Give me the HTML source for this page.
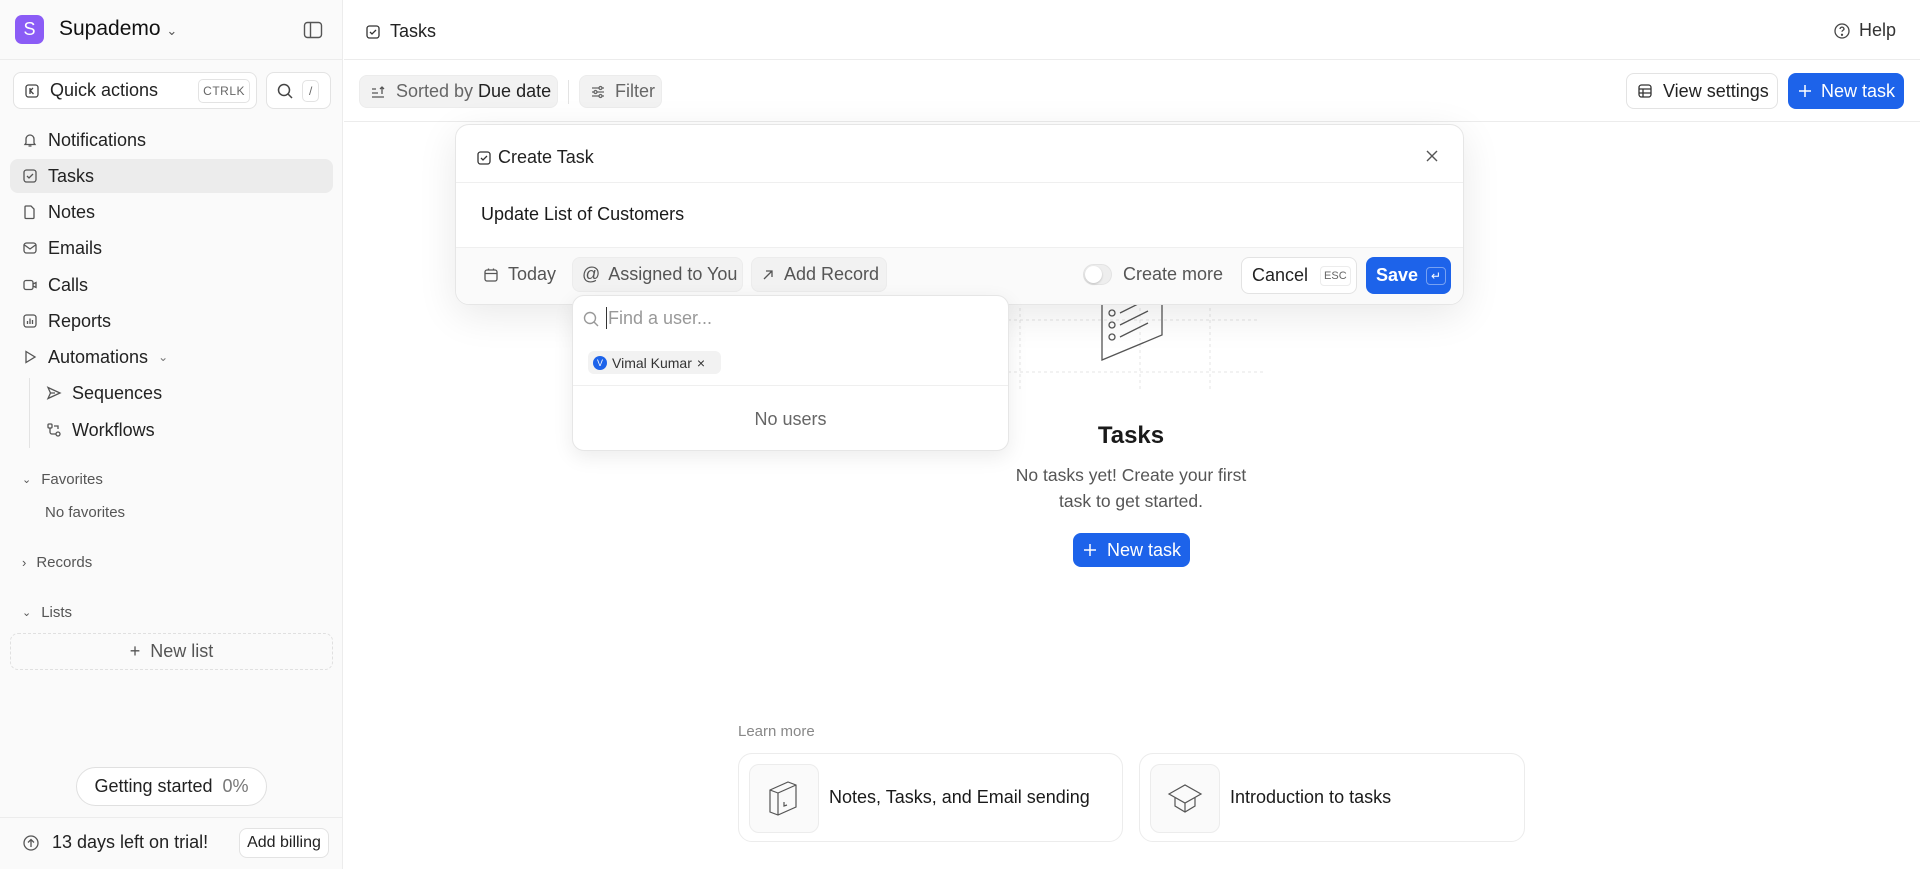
<!DOCTYPE html>
<html><head><meta charset="utf-8"><style>
*{box-sizing:border-box;margin:0;padding:0}
body{width:1920px;height:869px;overflow:hidden;font-family:"Liberation Sans",sans-serif;color:#1f2328;background:#fff;position:relative}
.abs{position:absolute}
svg{display:block}
.sb{left:0;top:0;width:343px;height:869px;background:#fafafa;border-right:1px solid #ececec}
.item{position:absolute;left:22px;font-size:18px;color:#222;display:flex;align-items:center;gap:10px;height:34px}
.sec{position:absolute;left:22px;font-size:15px;color:#555;display:flex;align-items:center;gap:10px}
.btn{position:absolute;border:1px solid #e3e3e3;border-radius:8px;background:#fff;display:flex;align-items:center;font-size:18px}
.blue{background:#1d63ea;color:#fff;border:none}
.grey{background:#f2f2f2;border:1px solid #ececec}
</style></head><body>
<div class="abs sb">
  <div class="abs" style="left:15px;top:15px;width:29px;height:29px;border-radius:7px;background:#8b5cf6;color:#fff;font-size:18px;display:flex;align-items:center;justify-content:center">S</div>
  <div class="abs" style="left:59px;top:17px;font-size:21px;color:#111">Supademo <span style="font-size:13px;color:#555">&#8964;</span></div>
  <svg class="abs" style="left:303px;top:20px" width="20" height="20" viewBox="0 0 20 20" fill="none" stroke="#555" stroke-width="1.4"><rect x="1.5" y="2.5" width="17" height="15" rx="3"/><line x1="7.5" y1="2.5" x2="7.5" y2="17.5"/></svg>
  <div class="abs" style="left:0;top:59px;width:343px;border-top:1px solid #ececec"></div>
  <div class="btn" style="left:13px;top:72px;width:244px;height:37px;padding-left:10px;gap:10px;font-size:18px;color:#222">
    <svg width="16" height="16" viewBox="0 0 16 16" fill="none" stroke="#444" stroke-width="1.3"><rect x="2" y="2" width="12" height="12" rx="2.5"/><path d="M6 5v6M6 8l3-3M6.5 8l3 3"/></svg>Quick actions
    <span style="position:absolute;right:6px;top:6px;border:1px solid #e3e3e3;border-radius:5px;font-size:12px;color:#666;padding:4px 4px;letter-spacing:.5px">CTRLK</span></div>
  <div class="btn" style="left:266px;top:72px;width:65px;height:37px;padding-left:9px;gap:8px">
    <svg width="18" height="18" viewBox="0 0 18 18" fill="none" stroke="#444" stroke-width="1.5"><circle cx="8" cy="8" r="5.5"/><path d="M12 12l4 4"/></svg>
    <span style="border:1px solid #e3e3e3;border-radius:5px;font-size:12px;color:#666;padding:3px 6px">/</span></div>
  <div class="abs" style="left:10px;top:159px;width:323px;height:34px;background:#ececec;border-radius:8px"></div>
  <div class="item" style="top:123px"><svg width="16" height="16" viewBox="0 0 16 16" fill="none" stroke="#555" stroke-width="1.3"><path d="M4 11V7a4 4 0 018 0v4l1 1.5H3z M6.5 14h3"/></svg>Notifications</div>
  <div class="item" style="top:159px"><svg width="16" height="16" viewBox="0 0 16 16" fill="none" stroke="#555" stroke-width="1.3"><rect x="2" y="2" width="12" height="12" rx="2.5"/><path d="M5 8l2 2 4-4"/></svg>Tasks</div>
  <div class="item" style="top:195px"><svg width="16" height="16" viewBox="0 0 16 16" fill="none" stroke="#555" stroke-width="1.3"><path d="M4 2h5l3 3v8.5a1 1 0 01-1 1H4a1 1 0 01-1-1V3a1 1 0 011-1z"/></svg>Notes</div>
  <div class="item" style="top:231px"><svg width="16" height="16" viewBox="0 0 16 16" fill="none" stroke="#555" stroke-width="1.3"><rect x="2" y="3" width="12" height="10" rx="2.5"/><path d="M2.5 5l5.5 4 5.5-4"/></svg>Emails</div>
  <div class="item" style="top:268px"><svg width="16" height="16" viewBox="0 0 16 16" fill="none" stroke="#555" stroke-width="1.3"><rect x="2" y="3.5" width="9" height="9" rx="2"/><path d="M11 7l3-1.5v5L11 9"/></svg>Calls</div>
  <div class="item" style="top:304px"><svg width="16" height="16" viewBox="0 0 16 16" fill="none" stroke="#555" stroke-width="1.3"><rect x="2" y="2" width="12" height="12" rx="2.5"/><path d="M5.5 11V8M8 11V5.5M10.5 11V7"/></svg>Reports</div>
  <div class="item" style="top:340px"><svg width="16" height="16" viewBox="0 0 16 16" fill="none" stroke="#555" stroke-width="1.3"><path d="M4 2.5l9 5.5-9 5.5z"/></svg>Automations <span style="font-size:12px;color:#777">&#8964;</span></div>
  <div class="abs" style="left:29px;top:378px;height:70px;border-left:1px solid #e3e3e3"></div>
  <div class="item" style="top:376px;left:46px"><svg width="16" height="16" viewBox="0 0 16 16" fill="none" stroke="#555" stroke-width="1.3"><path d="M2 2.5l12 5.5-12 5.5 2.5-5.5z M4.5 8H9"/></svg>Sequences</div>
  <div class="item" style="top:413px;left:46px"><svg width="16" height="16" viewBox="0 0 16 16" fill="none" stroke="#555" stroke-width="1.3"><rect x="2" y="2" width="4" height="4" rx="1"/><circle cx="12" cy="12" r="2"/><path d="M4 6v4a2 2 0 002 2h4M8 4h4v3"/></svg>Workflows</div>
  <div class="sec" style="top:471px"><span style="font-size:11px">&#8964;</span>Favorites</div>
  <div class="sec" style="top:504px;left:45px">No favorites</div>
  <div class="sec" style="top:554px"><span style="font-size:13px">&#8250;</span>Records</div>
  <div class="sec" style="top:604px"><span style="font-size:11px">&#8964;</span>Lists</div>
  <div class="abs" style="left:10px;top:633px;width:323px;height:37px;border:1px dashed #e0e0e0;border-radius:8px;display:flex;align-items:center;justify-content:center;font-size:18px;color:#555">+&nbsp; New list</div>
  <div class="abs" style="left:76px;top:767px;width:191px;height:39px;border:1px solid #e0e0e0;border-radius:20px;background:#fff;display:flex;align-items:center;justify-content:center;font-size:18px;color:#222">Getting started&nbsp;&nbsp;<span style="color:#777">0%</span></div>
  <div class="abs" style="left:0;top:817px;width:343px;border-top:1px solid #ececec"></div>
  <div class="abs" style="left:22px;top:832px;display:flex;align-items:center;gap:12px;font-size:18px;color:#222"><svg width="18" height="18" viewBox="0 0 18 18" fill="none" stroke="#555" stroke-width="1.3"><circle cx="9" cy="9" r="7"/><path d="M9 13V6M6 8.5l3-3 3 3"/></svg>13 days left on trial!</div>
  <div class="btn" style="left:239px;top:828px;width:90px;height:30px;justify-content:center;font-size:16px;color:#222">Add billing</div>
</div>

<!-- main header -->
<div class="abs" style="left:365px;top:21px;display:flex;align-items:center;gap:9px;font-size:18px;color:#222"><svg width="16" height="16" viewBox="0 0 16 16" fill="none" stroke="#333" stroke-width="1.3"><rect x="2" y="2" width="12" height="12" rx="2.5"/><path d="M5 8l2 2 4-4"/></svg>Tasks</div>
<div class="abs" style="left:1833px;top:20px;display:flex;align-items:center;gap:8px;font-size:18px;color:#333"><svg width="18" height="18" viewBox="0 0 18 18" fill="none" stroke="#444" stroke-width="1.3"><circle cx="9" cy="9" r="7"/><path d="M7 7a2 2 0 114 .3c-.5 1-2 1.2-2 2.4"/><circle cx="9" cy="12.8" r=".5" fill="#444"/></svg>Help</div>
<div class="abs" style="left:344px;top:59px;width:1576px;border-top:1px solid #ececec"></div>
<div class="btn grey" style="left:359px;top:75px;width:199px;height:33px;padding-left:10px;gap:10px;color:#666"><svg width="16" height="16" viewBox="0 0 16 16" fill="none" stroke="#555" stroke-width="1.3"><path d="M2 13h12M2 9h6M2 5h4M12 10V3M10 5l2-2 2 2"/></svg><span>Sorted by <span style="color:#222">Due date</span></span></div>
<div class="abs" style="left:568px;top:80px;height:24px;border-left:1px solid #e3e3e3"></div>
<div class="btn grey" style="left:579px;top:75px;width:83px;height:33px;padding-left:10px;gap:9px;color:#666"><svg width="16" height="16" viewBox="0 0 16 16" fill="none" stroke="#666" stroke-width="1.3"><path d="M2 4h7M12 4h2M2 8h2M7 8h7M2 12h7M12 12h2"/><circle cx="10.5" cy="4" r="1.5"/><circle cx="5.5" cy="8" r="1.5"/><circle cx="10.5" cy="12" r="1.5"/></svg>Filter</div>
<div class="btn" style="left:1626px;top:73px;width:152px;height:36px;padding-left:10px;gap:10px;color:#222"><svg width="16" height="16" viewBox="0 0 16 16" fill="none" stroke="#333" stroke-width="1.3"><rect x="2" y="2" width="12" height="12" rx="2.5"/><path d="M2 6h12M2 10h12M6 6v8"/></svg>View settings</div>
<div class="btn blue" style="left:1788px;top:73px;width:116px;height:36px;padding-left:10px;gap:9px"><svg width="14" height="14" viewBox="0 0 14 14" stroke="#fff" stroke-width="1.5"><path d="M7 1v12M1 7h12"/></svg>New task</div>
<div class="abs" style="left:344px;top:121px;width:1576px;border-top:1px solid #ececec"></div>

<!-- illustration -->
<svg class="abs" style="left:960px;top:290px" width="320" height="110" viewBox="0 0 320 110" fill="none" stroke="#e4e4e4" stroke-dasharray="3 3"><path d="M0 82H305M60 0V100M180 0V100M250 0V100M0 30H300"/></svg>
<svg class="abs" style="left:1100px;top:305px" width="66" height="60" viewBox="0 0 66 60" fill="none" stroke="#555" stroke-width="1.3"><path d="M2 0V55l60-25V0"/><circle cx="12" cy="8" r="3"/><circle cx="12" cy="20" r="3"/><circle cx="12" cy="32" r="3"/><path d="M20 8l28-14M20 20l28-14M20 32l28-14"/></svg>

<div class="abs" style="left:1000px;top:422px;width:262px;text-align:center;font-size:24px;font-weight:bold;color:#1a1a1a">Tasks</div>
<div class="abs" style="left:980px;top:462px;width:302px;text-align:center;font-size:17.5px;color:#555;line-height:26px">No tasks yet! Create your first<br>task to get started.</div>
<div class="btn blue" style="left:1073px;top:533px;width:117px;height:34px;padding-left:10px;gap:10px"><svg width="14" height="14" viewBox="0 0 14 14" stroke="#fff" stroke-width="1.5"><path d="M7 1v12M1 7h12"/></svg>New task</div>

<div class="abs" style="left:738px;top:723px;font-size:15px;color:#888">Learn more</div>
<div class="abs" style="left:738px;top:753px;width:385px;height:89px;border:1px solid #ececec;border-radius:14px"></div>
<div class="abs" style="left:749px;top:764px;width:70px;height:69px;border:1px solid #ececec;border-radius:10px;background:#fafafa"></div>
<svg class="abs" style="left:766px;top:780px" width="36" height="38" viewBox="0 0 36 38" fill="none" stroke="#555" stroke-width="1.2"><path d="M4 10l18-8 8 3v22l-18 8-8-3z M12 13l18-8M12 13v22M4 10l8 3"/><path d="M18 22v4l3-1"/></svg>
<div class="abs" style="left:829px;top:787px;font-size:18px;color:#1a1a1a">Notes, Tasks, and Email sending</div>
<div class="abs" style="left:1139px;top:753px;width:386px;height:89px;border:1px solid #ececec;border-radius:14px"></div>
<div class="abs" style="left:1150px;top:764px;width:70px;height:69px;border:1px solid #ececec;border-radius:10px;background:#fafafa"></div>
<svg class="abs" style="left:1167px;top:782px" width="36" height="34" viewBox="0 0 36 34" fill="none" stroke="#555" stroke-width="1.2"><path d="M2 12L18 3l16 9-16 9z M8 15v9l10 6 10-6v-9 M18 21v9"/></svg>
<div class="abs" style="left:1230px;top:787px;font-size:18px;color:#1a1a1a">Introduction to tasks</div>

<!-- modal -->
<div class="abs" style="left:455px;top:124px;width:1009px;height:181px;background:#fff;border:1px solid #e6e6e6;border-radius:14px;box-shadow:0 10px 40px rgba(0,0,0,.09)">
  <div class="abs" style="left:20px;top:22px;display:flex;align-items:center;gap:6px;font-size:18px;color:#222"><svg width="16" height="16" viewBox="0 0 16 16" fill="none" stroke="#333" stroke-width="1.3"><rect x="2" y="2" width="12" height="12" rx="2.5"/><path d="M5 8l2 2 4-4"/></svg>Create Task</div>
  <svg class="abs" style="left:969px;top:24px" width="14" height="14" viewBox="0 0 14 14" stroke="#555" stroke-width="1.4"><path d="M2 2l10 10M12 2L2 12"/></svg>
  <div class="abs" style="left:0;top:57px;width:1007px;border-top:1px solid #efefef"></div>
  <div class="abs" style="left:25px;top:79px;font-size:18px;color:#1a1a1a">Update List of Customers</div>
  <div class="abs" style="left:0;top:122px;width:1007px;height:57px;border-top:1px solid #efefef;background:#fafafa;border-radius:0 0 14px 14px"></div>
  <div class="abs" style="left:27px;top:139px;display:flex;align-items:center;gap:9px;font-size:18px;color:#555"><svg width="16" height="16" viewBox="0 0 16 16" fill="none" stroke="#555" stroke-width="1.3"><rect x="2" y="3" width="12" height="11" rx="2"/><path d="M2 6.5h12M5.5 1.5v2M10.5 1.5v2"/></svg>Today</div>
  <div class="btn grey" style="left:116px;top:132px;width:171px;height:35px;padding-left:9px;gap:8px;color:#555"><span style="font-size:18px">@</span>Assigned to You</div>
  <div class="btn grey" style="left:295px;top:132px;width:136px;height:35px;padding-left:10px;gap:10px;color:#555"><svg width="12" height="12" viewBox="0 0 12 12" stroke="#555" stroke-width="1.3" fill="none"><path d="M2 10L10 2M4 2h6v6"/></svg>Add Record</div>
  <div class="abs" style="left:627px;top:139px;width:29px;height:21px;border-radius:11px;background:#eee;border:1px solid #e3e3e3"><div style="position:absolute;left:1px;top:1px;width:17px;height:17px;border-radius:50%;background:#fff;box-shadow:0 1px 2px rgba(0,0,0,.2)"></div></div>
  <div class="abs" style="left:667px;top:139px;font-size:18px;color:#555">Create more</div>
  <div class="btn" style="left:785px;top:132px;width:116px;height:37px;padding-left:10px;color:#222">Cancel<span style="margin-left:12px;font-size:11px;color:#666;border:1px solid #ececec;border-radius:4px;padding:3px 3px">ESC</span></div>
  <div class="btn blue" style="left:910px;top:132px;width:85px;height:37px;padding-left:10px;font-weight:bold;font-size:18px">Save<span style="margin-left:8px;border:1px solid rgba(255,255,255,.4);border-radius:4px;font-size:12px;padding:1px 4px;font-weight:normal">&#8629;</span></div>
</div>

<!-- dropdown -->
<div class="abs" style="left:572px;top:295px;width:437px;height:156px;background:#fff;border:1px solid #e6e6e6;border-radius:12px;box-shadow:0 6px 20px rgba(0,0,0,.08)">
  <svg class="abs" style="left:9px;top:14px" width="18" height="18" viewBox="0 0 18 18" fill="none" stroke="#999" stroke-width="1.4"><circle cx="8" cy="8" r="5.5"/><path d="M12 12l4 4"/></svg>
  <div class="abs" style="left:33px;top:11px;height:22px;border-left:1px solid #333"></div>
  <div class="abs" style="left:35px;top:12px;font-size:18px;color:#999">Find a user...</div>
  <div class="abs" style="left:15px;top:55px;width:133px;height:23px;background:#f2f2f2;border-radius:6px;display:flex;align-items:center;padding-left:5px;gap:5px;font-size:14px;color:#333"><span style="width:14px;height:14px;border-radius:50%;background:#1d63ea;color:#fff;font-size:9px;display:flex;align-items:center;justify-content:center">V</span>Vimal Kumar <span style="font-size:14px">&#215;</span></div>
  <div class="abs" style="left:0;top:89px;width:435px;border-top:1px solid #efefef"></div>
  <div class="abs" style="left:0;top:113px;width:435px;text-align:center;font-size:18px;color:#666">No users</div>
</div>
</body></html>
